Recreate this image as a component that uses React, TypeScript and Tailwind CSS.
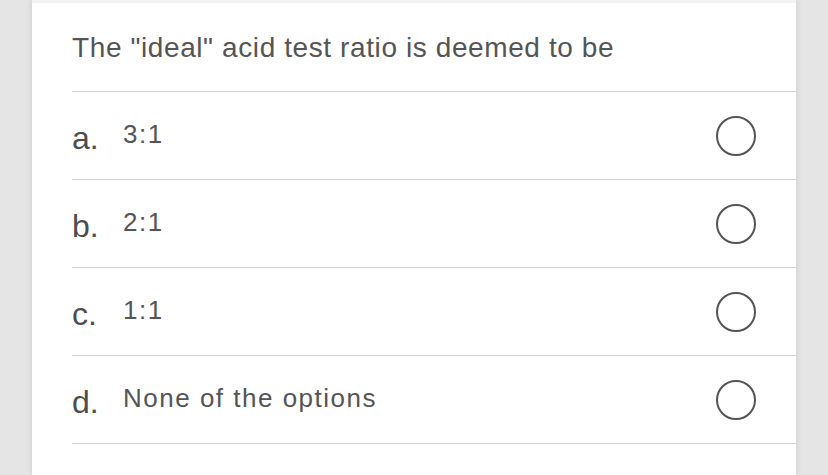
import React, { useState } from "react";

const options = [
  { letter: "a.", text: "3:1" },
  { letter: "b.", text: "2:1" },
  { letter: "c.", text: "1:1" },
  { letter: "d.", text: "None of the options" },
];

const App: React.FC = () => {
  const [selected, setSelected] = useState<number | null>(null);

  return (
    <div
      className="h-[475px] w-[828px] overflow-hidden bg-[#e5e5e5] px-[32px]"
      style={{ fontFamily: '"Liberation Sans", Arial, sans-serif' }}
    >
      <div className="h-full bg-[#f3f3f3] pt-[3px] shadow-[0_0_6px_rgba(0,0,0,0.12)]">
        <div className="h-full bg-white">
          <p className="pl-[40px] pt-[31px] pb-[29px] text-[28px] leading-[28px] tracking-[0.6px] text-[#555555]">
            The "ideal" acid test ratio is deemed to be
          </p>
          <ul className="ml-[40px] border-t border-[#cfcfcf]">
            {options.map((opt, idx) => (
              <li
                key={idx}
                onClick={() => setSelected(idx)}
                className="flex h-[88px] items-center border-b border-[#cfcfcf] pr-[40px]"
              >
                <span className="mt-[4px] w-[51px] text-[32px] leading-[32px] text-[#4d4d4d]">
                  {opt.letter}
                </span>
                <span className="mb-[4px] flex-1 text-[26px] leading-[26px] tracking-[1.5px] text-[#555555]">
                  {opt.text}
                </span>
                <span className="flex h-[40px] w-[40px] items-center justify-center rounded-full border-2 border-[#555555]">
                  {selected === idx && <span className="h-[24px] w-[24px] rounded-full bg-[#555555]" />}
                </span>
              </li>
            ))}
          </ul>
        </div>
      </div>
    </div>
  );
};

export default App;
